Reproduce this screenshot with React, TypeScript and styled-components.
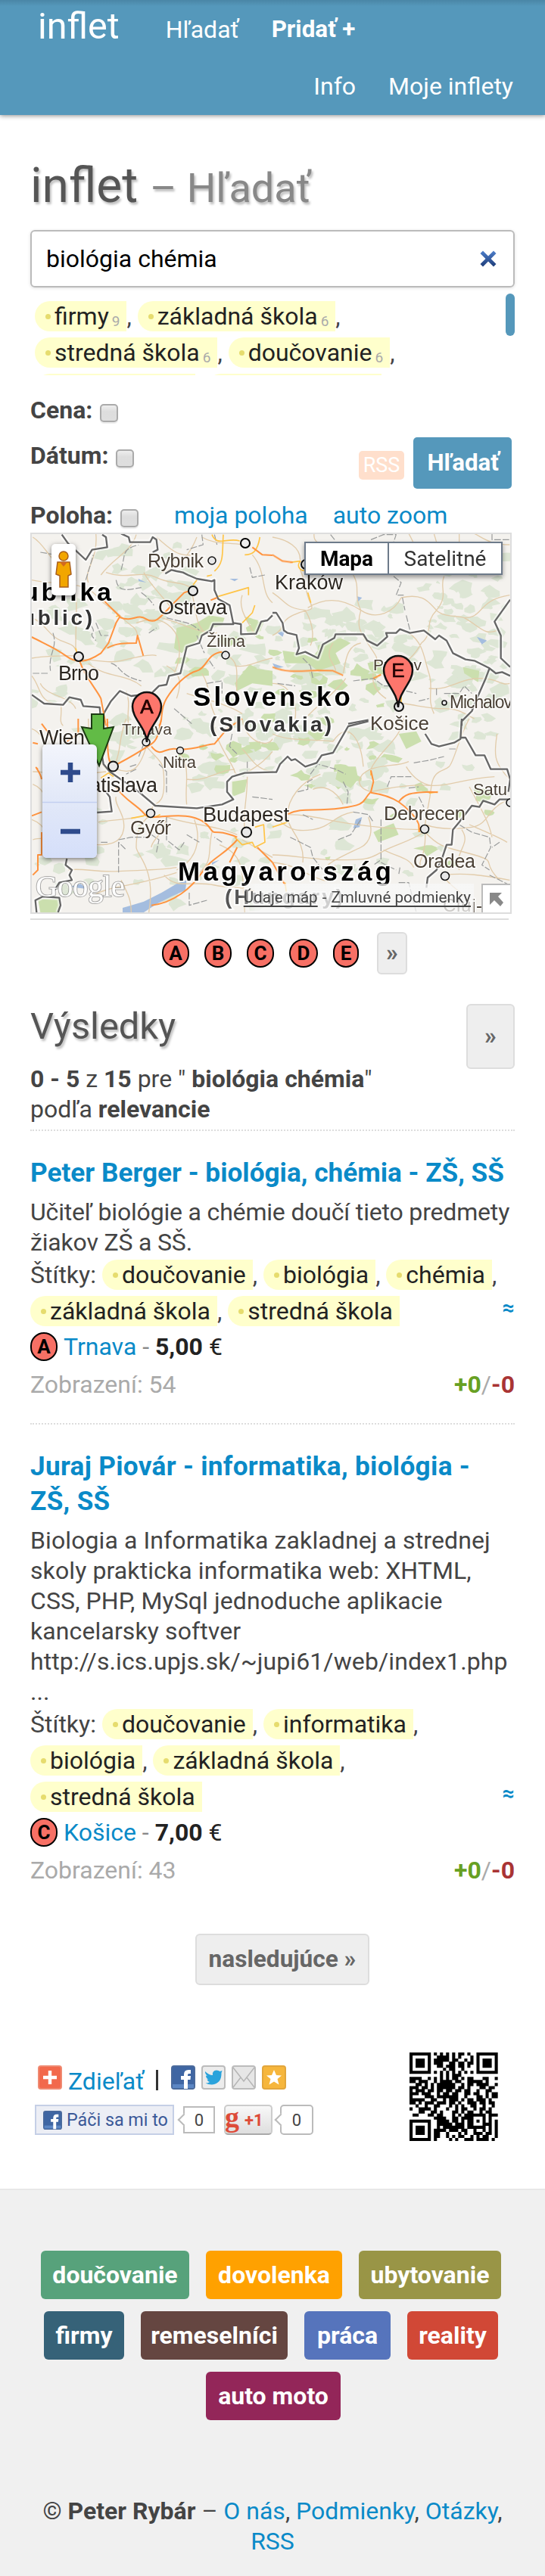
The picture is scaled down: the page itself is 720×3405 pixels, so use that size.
import React from "react";
import styled, { createGlobalStyle, css } from "styled-components";

const Global = createGlobalStyle`
  * { box-sizing: border-box; }
  body { margin: 0; background: #fff; font-family: Roboto, sans-serif; font-size: 32px; line-height: 40px; color: #444; }
  h1, h2, h3, p { margin: 0; font-weight: 400; }
`;

const Page = styled.div`width: 720px; overflow: hidden;`;

/* ---------- header ---------- */
const Header = styled.header`
  height: 152px;
  padding: 0 42px 0 50px;
  background: linear-gradient(#4a86a6, #5598bb 8px);
  box-shadow: 0 1px 6px rgba(0, 0, 0, 0.45);
  color: #fff;
`;
const NavRow = styled.nav<{ $end?: boolean }>`
  display: flex;
  align-items: flex-start;
  gap: 43px;
  height: ${p => (p.$end ? 75 : 77)}px;
  line-height: ${p => (p.$end ? 75 : 78)}px;
  justify-content: ${p => (p.$end ? "flex-end" : "flex-start")};
`;
const Brand = styled.span`font-size: 48.5px; line-height: 70px; margin-right: 18px;`;
const NavLink = styled.span<{ $bold?: boolean }>`
  font-size: ${p => (p.$bold ? 31.4 : 32)}px;
  font-weight: ${p => (p.$bold ? 700 : 400)};
  white-space: nowrap;
`;

/* ---------- search form ---------- */
const Main = styled.main`padding: 62px 40px 0;`;
const Title = styled.h1`
  height: 64px;
  font-size: 64px;
  line-height: 64px;
  color: #555;
  text-shadow: 2px 3px 3px rgba(0, 0, 0, 0.25);
  small { font-size: 54px; line-height: 1; color: #888; }
`;
const SearchBox = styled.div`
  display: flex;
  align-items: center;
  justify-content: space-between;
  height: 76px;
  margin-top: 26px;
  padding: 0 22px 0 19px;
  border: 2px solid #bbb;
  border-radius: 6px;
  color: #000;
  box-shadow: 0 1px 4px rgba(0, 0, 0, 0.12);
`;
const Cloud = styled.div`
  display: flex;
  justify-content: space-between;
  height: 116px;
  padding: 8px 0 0 6px;
  overflow: hidden;
`;
const CloudRows = styled.div`padding-top: 10px;`;
const Thumb = styled.div`width: 12px; height: 56px; border-radius: 6px; background: #5598bb;`;
const TagRow = styled.div`
  display: flex;
  height: 40px;
  white-space: pre;
  & + & { margin-top: 8px; }
`;
const TagBody = styled.span`
  display: flex;
  align-items: center;
  height: 40px;
  padding: 0 9px 0 14px;
  border-radius: 20px 0 0 20px;
  background: #ffffcc;
  color: #222;
  &::before { content: ""; width: 7px; height: 7px; margin-right: 5px; border-radius: 50%; background: #e6dc6e; }
  sub { font-size: 19px; line-height: 20px; color: #aaa; margin: 13px 0 0 4px; }
`;
const TagSliver = styled.span<{ $w: number }>`
  width: ${p => p.$w}px;
  height: 40px;
  margin-right: 14px;
  border-radius: 20px 0 0 20px;
  background: #ffffcc;
`;
const Filter = styled.div<{ $top: number }>`
  display: flex;
  height: 40px;
  margin-top: ${p => p.$top}px;
`;
const Label = styled.b`white-space: nowrap;`;
const Check = styled.span`
  width: 24px;
  height: 24px;
  margin: 12px 0 0 10px;
  border: 2px solid #aaa;
  border-radius: 5px;
  background: linear-gradient(#eee, #ddd 40%, #dedede);
  box-shadow: 0 2px 1px rgba(0, 0, 0, 0.08);
`;
const Actions = styled.div`display: flex; align-items: center; margin: -4px 4px 0 auto; height: 68px;`;
const Rss = styled.span`
  width: 60px;
  height: 38px;
  margin: 6px 12px 0 0;
  border-radius: 5px;
  background: #ffdfcc;
  color: #fff;
  font-size: 27px;
  line-height: 38px;
  text-align: center;
`;
const SearchButton = styled.button`
  width: 130px;
  height: 68px;
  padding: 0;
  border: 0;
  border-radius: 5px;
  background: #5598bb;
  color: #fff;
  font: 700 31.3px/68px Roboto, sans-serif;
  text-indent: 2px;
`;
const Link = styled.a`color: #0a8ac8;`;
const MapLink = styled(Link)<{ $gap: number }>`margin-left: ${p => p.$gap}px; white-space: nowrap;`;

/* ---------- map ---------- */
const MapFrame = styled.div`
  position: relative;
  width: 636px;
  height: 504px;
  margin-top: 3px;
  border: 2px solid #ddd;
  overflow: hidden;
  svg { display: block; }
`;
const Rule = styled.div`width: 632px; height: 2px; margin-top: 6px; background: #ddd;`;
const Pegman = styled.div`
  position: absolute; left: 26px; top: 13px; width: 32px; height: 68px;
  padding: 9px 5px;
  border-radius: 5px; background: #fff; box-shadow: 0 2px 6px rgba(0, 0, 0, 0.5);
`;
const MapTypes = styled.div`
  position: absolute; left: 360px; top: 10px; width: 262px; height: 44px;
  display: flex; border: 2px solid #6d7a8a; background: #fff;
  box-shadow: 0 3px 6px rgba(0, 0, 0, 0.4);
  font-size: 28px; line-height: 41px; text-align: center; color: #333;
  b { width: 110px; border-right: 2px solid #6d7a8a; color: #000; }
  span { flex: 1; }
`;
const ZoomControl = styled.div`
  position: absolute; left: 14px; top: 278px; width: 72px; height: 150px;
  border-radius: 6px; background: linear-gradient(#f3f5fc, #e3e9f8 45%, #d5dffa);
  box-shadow: 0 2px 6px rgba(0, 0, 0, 0.5);
`;
const Attribution = styled.div`
  position: absolute; left: 276px; bottom: 0; width: 308px; height: 38px; padding-right: 4px;
  display: flex; justify-content: flex-end; gap: 6px;
  background: linear-gradient(90deg, rgba(245,245,245,0), rgba(248,248,248,.75) 20px);
  font-size: 20.6px; line-height: 37px; color: #444; white-space: nowrap;
  u { text-underline-offset: 4px; text-decoration-thickness: 2px; }
`;
const Overview = styled.div`
  position: absolute; right: 0; bottom: 0; width: 38px; height: 38px;
  border: 2px solid #bbb; border-width: 2px 0 0 2px; background: #fff;
  svg { margin: 9px 0 0 8px; }
`;

/* ---------- results ---------- */
const Markers = styled.div`display: flex; align-items: center; height: 56px; margin: 16px 0 0 174px;`;
const Dot = styled.span<{ $w: number; $gap?: number }>`
  flex: none;
  display: inline-block;
  width: ${p => p.$w}px;
  height: 38px;
  margin-right: ${p => p.$gap ?? 20}px;
  border: 2px solid #000;
  border-radius: 19px;
  background: #f77065;
  color: #000;
  font-size: 26px;
  font-weight: 700;
  line-height: 35px;
  text-align: center;
`;
const grey = css`
  border: 2px solid #ddd;
  border-radius: 6px;
  background: #eee;
  color: #666;
  font: 700 31.6px/64px Roboto, sans-serif;
  padding: 0;
`;
const NextButton = styled.button<{ $w: number; $h: number }>`
  ${grey}
  width: ${p => p.$w}px;
  height: ${p => p.$h}px;
  line-height: ${p => p.$h - 4}px;
`;
const ResultsHead = styled.div`
  display: flex;
  justify-content: space-between;
  height: 80px;
  margin-top: 38px;
  padding-top: 1px;
`;
const Heading = styled.h2`
  font-size: 48.8px;
  line-height: 59px;
  color: #555;
  text-shadow: 2px 3px 3px rgba(0, 0, 0, 0.25);
`;
const Summary = styled.p`height: 87px;`;
const Result = styled.article`
  padding: 32px 0 31px;
  border-top: 2px dotted #ddd;
  &:last-of-type { padding-bottom: 0; }
`;
const ResultTitle = styled.h3<{ $track?: number }>`
  font-size: 35.2px;
  line-height: 46px;
  font-weight: 700;
  letter-spacing: ${p => p.$track ?? 0}px;
  color: #0a8ac8;
  white-space: nowrap;
`;
const Text = styled.p<{ $track: number }>`
  margin: 9px 0 3px;
  letter-spacing: ${p => p.$track}px;
  white-space: nowrap;
`;
const Similar = styled(Link)`margin-left: auto; font-weight: 700; font-size: 28px; line-height: 32px;`;
const Place = styled.div`display: flex; align-items: center; height: 40px; margin-top: 7px; color: #222; white-space: pre;`;
const Dim = styled.span`color: #888;`;
const Stats = styled.div`display: flex; justify-content: space-between; margin-top: 10px; color: #aaa;`;
const Vote = styled.b<{ $down?: boolean }>`color: ${p => (p.$down ? "#a93434" : "#67a023")};`;
const Pager = styled.div`display: flex; padding: 64px 0 0 218px;`;

/* ---------- share ---------- */
const Share = styled.section`display: flex; justify-content: space-between; margin: 89px 22px 62px 6px; height: 118px;`;
const ShareLinks = styled.div`padding-top: 17px;`;
const ShareRow = styled.div`
  display: flex;
  height: 32px;
  padding-left: 4px;
  gap: 8px;
  ${Link} { line-height: 42px; margin-right: 5px; }
`;
const Bar = styled.i`width: 3px; height: 27px; margin: 6px 9px 0 3px; background: #333;`;
const SocialRow = styled.div`display: flex; align-items: center; height: 40px; margin-top: 20px;`;
const Like = styled.div`
  display: flex; align-items: center; gap: 6px;
  width: 184px; height: 40px; padding-left: 9px;
  border: 2px solid #c5cfe6; background: #eceef5;
  font-size: 23.3px; color: #3b5998; white-space: nowrap;
`;
const Bubble = styled.div<{ $left: number; $w: number; $h: number; $round?: boolean }>`
  position: relative;
  width: ${p => p.$w}px; height: ${p => p.$h}px; margin-left: ${p => p.$left}px;
  border: 2px solid #bbb; border-radius: ${p => (p.$round ? 5 : 0)}px;
  font-size: 22px; line-height: ${p => p.$h - 3}px; text-align: center; color: #444;
  &::before {
    content: ""; position: absolute; left: -7px; top: 50%; width: 10px; height: 10px;
    margin-top: -6px;
    border: 2px solid #bbb; border-width: 0 0 2px 2px; background: #fff; transform: rotate(45deg);
  }
`;
const PlusOne = styled.div`
  display: flex; width: 64px; height: 40px; margin-left: 12px; padding-left: 1px;
  border: 2px solid #ccc; border-bottom-color: #aaa; border-radius: 5px;
  background: linear-gradient(#f8f8f8, #dedede); color: #dd4b39; overflow: hidden;
  font-size: 22px; line-height: 37px; font-weight: 700;
  span { font: 700 38px/28px "Liberation Serif", serif; width: 26px; margin-left: -2px; }
`;

/* ---------- footer ---------- */
const Footer = styled.footer`height: 512px; padding-top: 80px; border-top: 2px solid #e7e7e7; background: #f0f0f0;`;
const CatRow = styled.div<{ $shift?: number }>`
  display: flex; justify-content: center; gap: 22px; margin: 0 ${p => p.$shift ?? 4}px 16px 0;
`;
const Category = styled.a<{ $c: string; $w: number }>`
  width: ${p => p.$w}px; height: 64px; border-radius: 6px; background: ${p => p.$c};
  color: #fff; font-weight: 700; line-height: 65px; text-align: center;
`;
const Copyright = styled.p`margin-top: 100px; text-align: center; white-space: nowrap;`;

function Tag({ name, count, comma = true }: { name: string; count?: number; comma?: boolean }) {
  return (
    <>
      <TagBody>{name}{count !== undefined && <sub>{count}</sub>}</TagBody>
      {comma && ", "}
    </>
  );
}

/* Scattered forest patches over the hilly part of the map */
const patches: { d: string; c: string }[] = (() => {
  let s = 11;
  const r = () => ((s = (s * 16807) % 2147483647) / 2147483647);
  const zones = [
    [230, 820, 200, 150, 70, 1], [400, 800, 260, 110, 80, 0], [130, 720, 120, 110, 34, 0], [560, 720, 110, 120, 34, 0],
    [400, 880, 120, 160, 60, 1], [60, 800, 180, 90, 30, 0], [240, 960, 180, 80, 40, 1], [180, 1090, 200, 110, 26, 0],
    [420, 1000, 240, 160, 34, 1], [42, 900, 100, 280, 30, 0], [570, 860, 100, 120, 26, 0], [140, 950, 70, 60, 14, 0],
  ];
  const out: { d: string; c: string }[] = [];
  zones.forEach(([x, y, w, h, n, g]) => {
    for (let i = 0; i < n; i++) {
      const cx = x + r() * w, cy = y + r() * h, k = 3 + r() * 9, pts: string[] = [];
      for (let a = 0; a < 8; a++) {
        const q = k * (0.4 + r());
        pts.push(`${(cx + Math.cos(a * 0.785) * q * 1.3).toFixed(1)} ${(cy + Math.sin(a * 0.785) * q * 0.8).toFixed(1)}`);
      }
      out.push({ d: `M${pts.join("L")}Z`, c: g && r() > 0.72 ? "#cbdfae" : "#dde6d5" });
    }
  });
  return out;
})();

/* name, x, baseline, width, font size, dot x, dot y, dot radius */
const cities: [string, number, number, number, number, number, number, number][] = [
  ["Rybnik", 195, 750, 74, 25, 280, 741, 5], ["Ostrava", 209, 812, 91, 27, 255, 781, 6], ["Žilina", 273, 855, 51, 22, 298, 866, 5],
  ["Brno", 77, 899, 54, 27, 104, 868, 6], ["Kraków", 363, 779, 90, 27, 404, 746, 6], ["Prešov", 493, 886, 64, 21, 0, 0, 0],
  ["Košice", 489, 965, 78, 26, 527, 934, 6], ["Michalovce", 594, 936, 105, 23, 587, 929, 3], ["Trnava", 161, 971, 66, 21, 193, 981, 5],
  ["Wien", 52, 984, 60, 27, 0, 0, 0], ["Nitra", 215, 1015, 44, 22, 238, 992, 4.5], ["Bratislava", 92, 1047, 116, 27, 149.5, 1013, 6.5],
  ["Győr", 172, 1103, 54, 26, 199, 1075, 5.5], ["Budapest", 268, 1086, 114, 27.3, 325.6, 1100, 6.5], ["Debrecen", 507, 1084, 108, 25.5, 561, 1096, 5.5],
  ["Satu", 625, 1051, 45, 22, 674, 1061, 5], ["Oradea", 546, 1147, 82, 25, 588, 1158, 5.5], ["Cluj-", 585, 1205, 52, 24, 0, 0, 0],
];

/* Each quarter of the map is drawn on its own finer grid */
const NW = "translate(0 690) scale(.33333)";
const NE = "translate(360 690) scale(.33333)";
const SW = "translate(0 950) scale(.33333)";
const SE = "translate(360 950) scale(.33333)";

const minor: [string, string][] = [
  [NW, "M130 60C180 90 200 160 260 190S300 330 300 500M126 230C200 250 330 230 380 290S440 330 475 370M380 46C390 150 330 190 350 240M420 200C500 230 560 190 620 220S720 230 770 270M540 50C520 120 450 140 400 210M620 60C680 110 700 140 780 130M475 370C520 420 540 410 545 450M570 200C600 260 680 330 700 370M126 380C180 400 190 450 240 470S290 480 310 530M330 545C400 550 440 560 480 550S600 520 620 530M126 540C190 530 250 530 310 530M350 560C420 620 500 600 560 650M540 400C600 380 640 380 680 420S720 540 690 600M760 280C780 350 770 420 830 450M640 380C720 400 780 440 860 440M900 530C960 560 930 620 940 690M930 570C980 580 1020 550 1080 540M800 60C850 90 900 80 960 90M780 60C760 110 720 180 640 200M1000 130C1060 200 1030 280 1080 320M126 610C160 650 150 700 210 720M240 720C250 760 230 790 250 808M160 640C180 690 280 690 300 740M660 570C720 600 720 640 700 700M740 680C800 700 900 720 960 760M800 600C840 660 820 720 860 780M960 290C940 350 990 400 1010 450M500 670C520 720 500 760 510 808"],
  [NE, "M0 60C60 70 110 100 110 150M165 46C160 80 200 100 210 80M110 190C130 230 130 280 150 320S140 340 80 370S60 420 0 450M320 210C350 260 320 290 350 350M140 340C220 290 290 310 350 350S480 360 510 300M350 350C330 420 350 440 390 500S400 520 420 560M510 300C600 280 620 320 650 350S740 370 760 380M650 350C600 400 640 440 590 480M680 215C660 260 700 290 650 350M760 380C840 380 810 310 940 290M760 380C830 420 840 450 890 430M540 440C600 480 600 540 620 600S610 700 640 760M590 480C560 540 500 580 450 620M0 280C60 320 50 340 130 350C170 420 160 470 150 490M240 480C200 540 250 560 250 590M350 480C290 490 290 560 280 600M520 720C590 730 620 740 680 740S760 760 800 780M620 660C700 670 740 620 820 620S900 650 940 640M400 600C390 650 420 680 450 700M290 620C250 680 180 720 130 780M0 640C60 640 100 700 90 780M540 46C560 80 560 100 600 130M740 46C740 80 740 90 740 110M800 46C830 60 860 90 940 90M640 46L650 80"],
  [SW, "M126 40C180 60 180 130 230 160M420 200C380 160 350 90 350 0M500 0C470 80 480 120 460 170M130 210C190 210 260 230 420 210M580 110C550 210 520 220 460 200M710 130C760 200 730 260 740 340M580 110C640 180 650 160 650 260S600 320 600 370M600 380C540 420 540 480 540 510S620 590 590 768M390 410C450 400 530 400 590 380M460 310C450 340 500 380 490 440S420 500 390 500M270 600C330 590 370 610 470 605S640 600 700 590M130 260C180 280 190 330 170 380M126 400C180 420 200 470 170 530M660 390C650 460 600 480 600 510M660 390C740 420 850 420 940 460M840 450C820 540 850 560 780 620M850 0C840 80 920 170 930 210S1040 180 1080 130M740 240C820 250 850 210 930 200M960 0C970 90 1060 120 1080 80M960 120C1000 160 1010 200 1080 210M980 230C980 330 960 380 970 440M770 400C800 480 780 560 700 600M480 640C510 700 520 720 520 768M370 700C440 660 520 670 700 610M870 500C970 540 960 600 970 768M960 480C1030 520 1060 540 1080 550M650 620C700 680 760 640 850 660S960 650 1080 720M130 480C180 460 340 500 390 500"],
  [SE, "M0 60C60 90 150 80 240 90C300 0 350 80 360 190M520 0C510 80 420 130 390 200C440 180 500 190 540 170M390 200C340 220 320 270 390 290M60 380C60 320 110 250 190 220M390 290C480 270 560 260 630 265S740 240 880 230M630 265C640 200 680 210 700 190S740 70 780 0M630 265C620 350 610 370 605 420C660 440 720 440 790 430S850 350 940 320M605 450C610 560 570 560 590 590M600 440C500 440 400 430 300 415S150 380 60 380M600 450C540 490 480 500 430 530S360 560 260 560S80 540 0 540M380 390C400 440 390 490 350 510S240 560 220 580M60 390C60 440 130 480 120 570M0 570C100 580 130 620 200 640S240 580 250 580M440 520C500 550 540 550 560 590M605 450C670 520 700 510 800 540S820 560 900 640M680 620C760 610 830 620 940 640M680 630C720 680 780 700 800 768M530 190C560 240 600 260 630 265M750 440C790 500 720 520 740 600M780 420C850 450 900 470 930 490M890 60C880 130 870 170 940 240M780 270C840 380 860 420 870 470M160 280C200 260 250 280 280 340M0 380C60 440 90 450 160 440S250 380 320 370"],
];
const dashed: [string, string][] = [
  [NW, "M480 190C500 120 480 110 550 90M460 230C470 280 500 270 560 260M560 280C600 310 600 320 610 330M800 50L805 90L740 110M130 600L190 600M210 440C230 500 190 520 200 590M380 400L400 450L430 450M440 560C480 570 470 610 560 630M590 440L620 420M850 50L860 90M990 180L1000 220L1050 210M780 450L810 520M830 550L850 580M160 120L280 140L230 100M340 230L370 130M820 640L880 630V680M690 740L760 800M660 380C740 400 760 400 790 430M360 410C390 450 340 430 380 470"],
  [NE, "M230 50L250 75M390 70L440 50H490L480 80M870 46V70L940 70M480 215L510 240L490 290L520 290M515 300L525 350M530 370L545 430M120 540L150 570L160 620M20 640L90 650M320 630L400 620L440 650H480M530 670L570 680M650 660V690M580 710L620 700M680 680L740 680L760 650L790 680"],
  [SW, "M550 150L570 100M630 180L660 210V300M515 190L545 180M660 390V480L710 520L730 490M620 530L630 480L600 460M470 610L470 490L500 520M470 480L520 470L600 470M740 460L790 490M880 490L850 470M980 170V210M920 60L910 110L940 140M750 690V740L820 720M400 490L430 490M1000 310L1080 320M540 200L500 220"],
  [SE, "M150 220L180 180L250 200L290 220M280 250L300 290L295 340M320 370L380 380L400 410M260 480L310 460L350 400M430 400V560L400 580M560 175L620 165L680 150M455 270L470 230L550 230M540 275L580 270M580 310L600 350M740 420L790 450L860 470L865 510L830 580L860 600M900 490L870 510M505 590L500 620M120 380L160 400M70 470L150 510L160 550L200 600M430 570L490 600M500 650H540L570 768M860 620L940 660M700 120L730 120M100 290L140 280V250L160 240"],
];
const major: [string, string][] = [
  [NW, "M126 456C170 480 220 500 260 530S340 560 400 520L430 480L460 400L475 375L410 310M475 378C530 400 540 360 580 385S640 370 700 310L730 280L760 270M425 500C460 480 500 480 540 480L545 450L568 530M315 550C340 620 380 660 400 700L420 808M880 515C820 520 820 580 780 590S690 650 660 700S650 780 630 808M1000 100L1040 130L1080 132M835 310L860 300"],
  [NE, "M0 130L40 155L80 160M0 575C60 600 120 590 180 588L240 590L280 608M400 620L430 605"],
  [SW, "M425 0C430 60 420 130 435 170L465 180C540 140 570 120 600 100S630 40 640 0M600 110C640 160 650 110 700 120S820 100 850 100L900 40L960 0M460 270C490 320 540 340 570 375S680 370 760 390S830 450 850 450S890 450 940 470M940 480C890 540 840 550 800 610S690 730 600 740M940 510L910 570M1020 510L1080 570M130 95L150 100M165 20L210 80M265 90L310 60V0M130 620L150 600L150 540L165 540V450M126 385L165 370M150 200C130 180 160 210 165 240"],
  [SE, "M60 378C120 350 160 370 270 355S350 330 390 290L400 250L390 205M390 293C440 300 470 310 500 330S570 390 580 420L583 450M500 330C530 290 560 295 620 290L655 292M0 570L50 660"],
];
const yellow: [string, string][] = [
  [NW, "M840 50C860 100 900 60 950 75M885 50C880 120 890 160 850 195M1030 60C1020 120 1000 130 970 130M865 295L985 260L985 290M1010 330L1000 360L960 400M765 250L780 230M820 215L840 210M460 375L475 370M300 500L305 520"],
  [NE, "M70 160L110 155C90 180 120 200 130 190M140 280L152 320M510 690V720M430 605L420 610"],
  [SW, "M570 380C600 400 620 390 635 380M930 470L960 500L1000 490L1010 510L1050 490L1045 420L1010 430M520 395L570 385M400 235L430 215L450 230"],
  [SE, "M390 205V225M620 295L655 290M580 420V450M50 650L55 690M0 430L60 410"],
];
const borders: [string, string][] = [
  [NW, "M245 50L270 85L340 150L365 110L425 100L420 60L405 50M480 46L510 60L515 80L595 80L605 60L620 70L625 110L605 120M655 205L680 190L700 195L725 200L745 210L780 225L840 235L850 230L850 270L865 305L910 330L925 405L845 405L835 430L800 450L790 480L740 495L715 600L670 610L660 645L630 650L600 680L520 690L475 670L440 710L405 770M925 400L955 405V445L1015 443L1035 395L1060 390L1080 370M126 685L175 720L250 725L275 695L320 705L330 730L395 735L400 790"],
  [NE, "M0 360L15 360L40 400L45 430L60 440L95 448L105 500L95 525L130 515L180 540L200 485L245 460L250 445L325 445L360 445L375 470L415 490L455 455L450 440L490 440L505 425L545 440L600 430L645 465L660 450L690 470L715 520L765 545L800 550L860 580L885 600L910 595L942 610M942 308L880 395L905 450V540L942 575M860 580L845 620L810 700L790 750L750 790V808M300 800L380 785"],
  [SW, "M400 120L410 180L435 210L550 290L615 345L780 355L880 340L925 320L900 290V250L920 230L970 215L1080 212M385 372L443 368L435 310L420 290M265 555L260 580L285 600L275 620L285 640L235 650L210 690M145 768L140 720L170 705L235 710L240 740L230 768"],
  [SE, "M0 212L15 212L30 180L60 150L75 165L90 160L130 190L175 175L195 145L240 135L300 30L380 10M750 0L745 80L720 95L660 110L630 100L605 60M745 75H765L805 145H840L865 200L930 200L942 240L935 290M942 320L900 320L880 340L835 325L820 350L790 345L740 410L715 440L710 500L690 500L670 560L650 600L615 630L610 670"],
];

function Lines({ set, stroke, width, dash, opacity }: { set: [string, string][]; stroke: string; width: number; dash?: string; opacity?: number }) {
  return (
    <g fill="none" stroke={stroke} strokeWidth={width} strokeDasharray={dash} strokeLinejoin="round" opacity={opacity}>
      {set.map(([t, d], i) => <path key={i} transform={t} d={d} />)}
    </g>
  );
}

function Pin({ x, y, tip, letter }: { x: number; y: number; tip: number; letter: string }) {
  return (
    <g>
      <path
        d={`M${x} ${tip}C${x - 1} ${y + 28} ${x - 19} ${y + 16} ${x - 19} ${y}A19 19 0 0 1 ${x + 19} ${y}C${x + 19} ${y + 16} ${x + 1} ${y + 28} ${x} ${tip}Z`}
        fill="#fd766c" stroke="#111" strokeWidth="2.5"
      />
      <text x={x} y={y + 9} textAnchor="middle" fontSize="26" fill="#200" stroke="#200" strokeWidth=".7">{letter}</text>
    </g>
  );
}

function MapDrawing() {
  return (
    <svg width="632" height="500" viewBox="42 706 632 500" fontFamily="Liberation Sans, Arial, sans-serif">
      <rect x="42" y="706" width="632" height="500" fill="#f4f2ee" />
      {patches.map((p, i) => <path key={i} d={p.d} fill={p.c} />)}
      <g fill="#cbdfae">
        <path transform={NW} d="M700 420L780 400L830 370L890 380L880 410L840 420L790 460L760 490L720 520L690 500ZM960 600L1000 580L1080 590V650L1000 640L940 670L930 640Z" />
        <path transform={NE} d="M180 490L270 460L310 480L250 520L270 560L180 590L140 560L50 560L40 510L110 520L180 545ZM755 575L820 590L815 635L760 600Z" />
        <path transform={SW} d="M920 250L980 240L970 290L920 310ZM150 715L235 715L235 768H160Z" />
        <path transform={SE} d="M260 190L330 190L340 240L310 275L250 240ZM500 60L570 50L590 90L530 120ZM440 430L480 415L500 460L420 490L400 450Z" />
      </g>
      <g fill="#a4bddf">
        <path transform={SW} d="M486 768V750L520 740L570 725L640 690L700 655L740 640L735 680L680 705L620 735L570 768ZM280 665L320 655L345 675L300 670ZM840 570L870 560L840 580Z" />
        <path transform={NE} d="M20 440L50 430L40 455ZM810 455L850 470L830 485ZM335 295L355 300L340 315ZM0 560L45 575L10 580Z" />
        <path transform={SE} d="M330 400L355 390L345 430L320 435Z" />
        <path transform={NW} d="M548 225L580 240L550 235ZM910 225H945L930 235Z" />
      </g>
      <Lines set={minor} stroke="#e2ccab" width={4} />
      <Lines set={dashed} stroke="#999b9b" width={3.6} dash="26 7" />
      <Lines set={borders} stroke="#fff" width={20} opacity={0.6} />
      <Lines set={borders} stroke="#666" width={7} />
      <Lines set={yellow} stroke="#ffc446" width={5} />
      <Lines set={major} stroke="#ff9440" width={6} />
      <circle cx="324" cy="718" r="6" fill="#eee" stroke="#000" strokeWidth="2" />
      {cities.map(([n, x, y, len, size, cx, cy, r]) => (
        <g key={n}>
          {r > 0 && <circle cx={cx} cy={cy} r={r} fill="#e8e8e8" stroke="#111" strokeWidth={r > 5.5 ? 2 : 1.5} />}
          <text x={x} y={y} textLength={len} fontSize={size} fill={size > 26 ? "#2b2620" : "#4a4035"} stroke="#fff" strokeWidth="3" strokeOpacity=".75" paintOrder="stroke">{n}</text>
        </g>
      ))}
      <g fontWeight="700" stroke="#fff" strokeWidth="4" strokeOpacity=".8" paintOrder="stroke">
        <text x="30" y="794" textLength="117" fontSize="34" fill="#000">ublika</text>
        <text x="29" y="826" textLength="93" fontSize="28" fill="#333">ublic)</text>
        <text x="255" y="933" textLength="208" fontSize="35" fill="#000">Slovensko</text>
        <text x="277" y="967" textLength="161" fontSize="28" fill="#333">(Slovakia)</text>
        <text x="235" y="1164" textLength="282" fontSize="35" fill="#000">Magyarország</text>
        <text x="297" y="1195" textLength="156" fontSize="28" fill="#555">(Hungary)</text>
      </g>
      <path d="M121 944H137V963L150 961L131 1012L108 961L121 963Z" fill="#62bb46" stroke="#1d3b14" strokeWidth="2" />
      <Pin x={194} y={934} tip={981} letter="A" />
      <Pin x={526} y={886} tip={935} letter="E" />
      <text x="47" y="1185" textLength="118" fontSize="41" fontFamily="Liberation Serif, serif" fill="#fff" stroke="#777" strokeOpacity=".6" strokeWidth="2" paintOrder="stroke">Google</text>
    </svg>
  );
}

/* ---------- share icons ---------- */
function Icon({ kind, size = 32, h = 32 }: { kind: "plus" | "fb" | "tw" | "mail" | "star"; size?: number; h?: number }) {
  const fill = { plus: "#f2694c", fb: "#3f66a3", tw: "#ececec", mail: "#e6e6e6", star: "#f6b63c" }[kind];
  const edge = { plus: "#ef8a72", fb: "#4a6a9c", tw: "#bbb", mail: "#bbb", star: "#e2a63c" }[kind];
  return (
    <svg width={size} height={h} viewBox="0 0 32 32" preserveAspectRatio="none">
      <rect x="1" y="1" width="30" height="30" rx="3" fill={fill} stroke={edge} strokeWidth="2" />
      {kind === "plus" && <path d="M16 7V25M7 16H25" stroke="#fff" strokeWidth="4.4" />}
      {kind === "fb" && <path d="M2 25H30V30H2Z" fill="#5b86c4" />}
      {kind === "fb" && <path d="M17 31V19H13V14H17V12Q17 6 23 6H26V11H23.5Q22 11 22 12.5V14H26L25.5 19H22V31Z" fill="#fff" />}
      {kind === "tw" && <path d="M5 8Q10 13 15 13Q14 7 20 6.5Q23 6.5 24.5 8L27.5 7L26.5 10Q27 24 14 25.5Q9 25.5 5.5 23.5Q9 23.5 11 22Q8 21 7.5 18.5H9.5Q6 17 6 13.5L8 14Q4.5 11 5 8Z" fill="#2aa3dc" />}
      {kind === "mail" && <path d="M2 3L16 21L30 3M2 29L12 16M30 29L20 16" fill="none" stroke="#b5b5b5" strokeWidth="1.5" />}
      {kind === "star" && <path d="M16 6L19 13L26 13.5L20.5 18L22.5 25.5L16 21.5L9.5 25.5L11.5 18L6 13.5L13 13Z" fill="#fff" />}
    </svg>
  );
}

const qr = [
  "#######.#.#.#.#.##.#..#######",
  "#.....#..####.#.#...#.#.....#",
  "#.###.#.#####.##..#.#.#.###.#",
  "#.###.#.###..##.##.##.#.###.#",
  "#.###.#..##.###.##.#..#.###.#",
  "#.....#....#.##..#....#.....#",
  "#######.#.#.#.#.#.#.#.#######",
  "..........#.#.###............",
  "####..#.#.#.#.##.#.##...##..#",
  "##.###..#.####.##..#####.#...",
  "..##.#.#.######..#.##.####..#",
  "###.##.#.######.##.#...##.##.",
  "#.###.##.##.##.##.##..#..##..",
  "###.###..#.##.##..##.##..#.##",
  "#....###.#######..#...##.#.##",
  "#####..##..#.###.#.##.###.#..",
  "##.#.###.###.##.#..###.##.##.",
  "..#..#..##...#.#.#..##..#..#.",
  "#..####.#...#..#.##..#.##.#..",
  "...##..##.#...##.#.##..#.##..",
  ".##...##.##...#.#.#######.###",
  "........####..##.####...#.#..",
  "#######..####.##.#.##.#.#.#.#",
  "#.....#..#####.###.##...###.#",
  "#.###.#..#.#######.######.#.#",
  "#.###.#.####.###.##..#..#.#.#",
  "#.###.#.##..#...#.#..###.##.#",
  "#.....#.##..#.#.##..#.#.##..#",
  "#######.#....#.#..###.####.#.",
];

function QrCode() {
  return (
    <svg width="116.6" height="117" viewBox="0 0 29 29" preserveAspectRatio="none">
      <path d={qr.map((row, y) => [...row].map((c, x) => (c === "#" ? `M${x} ${y}h1.02v1.02h-1.02z` : "")).join("")).join("")} />
    </svg>
  );
}

function Score() {
  return <span><Vote>+0</Vote>/<Vote $down>-0</Vote></span>;
}

export default function App() {
  return (
    <Page>
      <Global />
      <Header>
        <NavRow>
          <Brand>inflet</Brand>
          <NavLink>Hľadať</NavLink>
          <NavLink $bold>Pridať +</NavLink>
        </NavRow>
        <NavRow $end>
          <NavLink>Info</NavLink>
          <NavLink>Moje inflety</NavLink>
        </NavRow>
      </Header>
      <Main>
        <Title>inflet <small>– Hľadať</small></Title>
        <SearchBox>
          <span>biológia chémia</span>
          <svg width="22" height="22" viewBox="0 0 22 22">
            <defs><linearGradient id="x" x1="0" y1="0" x2="0" y2="1"><stop stopColor="#4f80cc" /><stop offset="1" stopColor="#1d3c78" /></linearGradient></defs>
            <path d="M4 0.5L11 7.5L18 0.5L21.5 4L14.5 11L21.5 18L18 21.5L11 14.5L4 21.5L0.5 18L7.5 11L0.5 4Z" fill="url(#x)" />
          </svg>
        </SearchBox>
        <Cloud>
          <CloudRows>
            <TagRow><Tag name="firmy" count={9} /><Tag name="základná škola" count={6} /></TagRow>
            <TagRow><Tag name="stredná škola" count={6} /><Tag name="doučovanie" count={6} /></TagRow>
            <TagRow><TagSliver $w={212} /><TagSliver $w={232} /></TagRow>
          </CloudRows>
          <Thumb />
        </Cloud>
        <Filter $top={26}><Label>Cena:</Label><Check /></Filter>
        <Filter $top={20}>
          <Label>Dátum:</Label><Check />
          <Actions><Rss>RSS</Rss><SearchButton>Hľadať</SearchButton></Actions>
        </Filter>
        <Filter $top={39}>
          <Label>Poloha:</Label><Check />
          <MapLink $gap={47}>moja poloha</MapLink>
          <MapLink $gap={33}>auto zoom</MapLink>
        </Filter>
        <MapFrame>
          <MapDrawing />
          <Pegman>
            <svg width="22" height="50" viewBox="0 0 22 50">
              <g fill="#f2a600" stroke="#a95f1c" strokeWidth="1.5">
                <path d="M3 15H19L21 31L17 33V48H6V33L1 31Z" />
                <circle cx="11" cy="7" r="6" />
              </g>
              <path d="M6 15H16L11 21Z" fill="#d2691e" />
            </svg>
          </Pegman>
          <MapTypes><b>Mapa</b><span>Satelitné</span></MapTypes>
          <ZoomControl>
            <svg width="72" height="150">
              <path d="M24 37H50M37 24V50M24 115H50" stroke="#2f4b8c" strokeWidth="6.5" />
              <path d="M0 76.5H72" stroke="#c3cff0" strokeWidth="1.5" />
            </svg>
          </ZoomControl>
          <Attribution><u>Údaje máp</u><span>-</span><u>Zmluvné podmienky</u></Attribution>
          <Overview><svg width="20" height="20" viewBox="0 0 20 20"><path d="M1 1H17L12 6L19 14L15 19L7 11L1 17Z" fill="#888" /></svg></Overview>
        </MapFrame>
        <Rule />
        <Markers>
          <Dot $w={36}>A</Dot><Dot $w={36}>B</Dot><Dot $w={36}>C</Dot><Dot $w={38}>D</Dot><Dot $w={34} $gap={24}>E</Dot>
          <NextButton $w={40} $h={56}>»</NextButton>
        </Markers>
        <ResultsHead>
          <Heading>Výsledky</Heading>
          <NextButton $w={64} $h={86}>»</NextButton>
        </ResultsHead>
        <Summary><b>0 - 5</b> z <b>15</b> pre " <b>biológia chémia</b>"<br />podľa <b>relevancie</b></Summary>
        <Result>
          <ResultTitle>Peter Berger - biológia, chémia - ZŠ, SŠ</ResultTitle>
          <Text $track={-0.18}>Učiteľ biológie a chémie doučí tieto predmety<br />žiakov ZŠ a SŠ.</Text>
          <TagRow>{"Štítky: "}<Tag name="doučovanie" /><Tag name="biológia" /><Tag name="chémia" /></TagRow>
          <TagRow><Tag name="základná škola" /><Tag name="stredná škola" comma={false} /><Similar>≈</Similar></TagRow>
          <Place><Dot $w={36} $gap={8}>A</Dot><Link>Trnava</Link><Dim> - </Dim><b>5,00</b> €</Place>
          <Stats><span>Zobrazení: 54</span><Score /></Stats>
        </Result>
        <Result>
          <ResultTitle $track={0.3}>Juraj Piovár - informatika, biológia -<br />ZŠ, SŠ</ResultTitle>
          <Text $track={0.1}>
            Biologia a Informatika zakladnej a strednej<br />skoly prakticka informatika web: XHTML,<br />
            CSS, PHP, MySql jednoduche aplikacie<br />kancelarsky softver<br />
            http://s.ics.upjs.sk/~jupi61/web/index1.php<br />...
          </Text>
          <TagRow>{"Štítky: "}<Tag name="doučovanie" /><Tag name="informatika" /></TagRow>
          <TagRow><Tag name="biológia" /><Tag name="základná škola" /></TagRow>
          <TagRow><Tag name="stredná škola" comma={false} /><Similar>≈</Similar></TagRow>
          <Place><Dot $w={36} $gap={8}>C</Dot><Link>Košice</Link><Dim> - </Dim><b>7,00</b> €</Place>
          <Stats><span>Zobrazení: 43</span><Score /></Stats>
        </Result>
        <Pager><NextButton $w={230} $h={68}>nasledujúce »</NextButton></Pager>
        <Share>
          <ShareLinks>
            <ShareRow>
              <Icon kind="plus" /><Link>Zdieľať</Link><Bar />
              <Icon kind="fb" /><Icon kind="tw" /><Icon kind="mail" /><Icon kind="star" />
            </ShareRow>
            <SocialRow>
              <Like><Icon kind="fb" size={25} h={25} />Páči sa mi to</Like>
              <Bubble $left={12} $w={42} $h={36}>0</Bubble>
              <PlusOne><span>g</span>+1</PlusOne>
              <Bubble $left={10} $w={44} $h={40} $round>0</Bubble>
            </SocialRow>
          </ShareLinks>
          <QrCode />
        </Share>
      </Main>
      <Footer>
        <CatRow>
          <Category $c="#57a27b" $w={196}>doučovanie</Category>
          <Category $c="#ffa100" $w={180}>dovolenka</Category>
          <Category $c="#999546" $w={188}>ubytovanie</Category>
        </CatRow>
        <CatRow>
          <Category $c="#366278" $w={106}>firmy</Category>
          <Category $c="#654641" $w={194}>remeselníci</Category>
          <Category $c="#5674bc" $w={114}>práca</Category>
          <Category $c="#d14836" $w={120}>reality</Category>
        </CatRow>
        <CatRow $shift={-2}><Category $c="#932659" $w={178}>auto moto</Category></CatRow>
        <Copyright>
          © <b>Peter Rybár</b> – <Link>O nás</Link>, <Link>Podmienky</Link>, <Link>Otázky</Link>,<br /><Link>RSS</Link>
        </Copyright>
      </Footer>
    </Page>
  );
}
